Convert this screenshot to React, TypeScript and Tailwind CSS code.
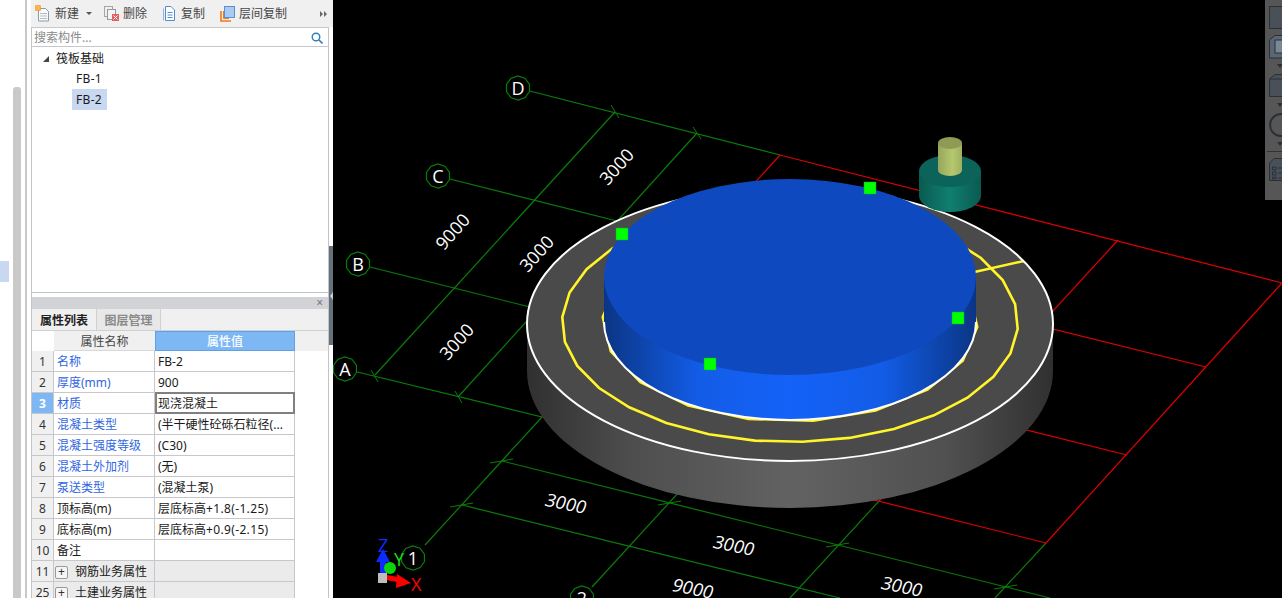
import React from "react";

const cjk = "font-['Noto_Sans','Noto_Sans_CJK_SC',sans-serif]";

interface Row {
  no: number;
  name: string;
  value: string;
  tail?: string;
  blue?: boolean;
  active?: boolean;
  group?: boolean;
}

const rows: Row[] = [
  { no: 1, name: "名称", value: "FB-2", blue: true },
  { no: 2, name: "厚度(mm)", value: "900", blue: true },
  { no: 3, name: "材质", value: "现浇混凝土", blue: true, active: true },
  { no: 4, name: "混凝土类型", value: "(半干硬性砼砾石粒径(...", blue: true },
  { no: 5, name: "混凝土强度等级", value: "(C30)", blue: true },
  { no: 6, name: "混凝土外加剂", value: "(无)", blue: true },
  { no: 7, name: "泵送类型", value: "(混凝土泵)", blue: true },
  { no: 8, name: "顶标高(m)", value: "层底标高", tail: "+1.8(-1.25)" },
  { no: 9, name: "底标高(m)", value: "层底标高", tail: "+0.9(-2.15)" },
  { no: 10, name: "备注", value: "" },
  { no: 11, name: "钢筋业务属性", value: "", group: true },
  { no: 25, name: "土建业务属性", value: "", group: true },
];

// faceted ring, the app draws its arcs as short straight pieces
function ring(cx: number, cy: number, rx: number, ry: number, n: number, phase = 0) {
  const pts: string[] = [];
  for (let i = 0; i < n; i++) {
    const a = phase + (i * Math.PI * 2) / n;
    pts.push(`${(cx + rx * Math.cos(a)).toFixed(1)},${(cy + ry * Math.sin(a)).toFixed(1)}`);
  }
  return pts.join(" ");
}

const GREEN = "#0a7d0a";
const RED = "#e00000";

const greenLines = [
  [518, 88, 780, 155],
  [438, 176, 625, 223],
  [358, 264, 530, 307],
  [345, 369, 542, 417],
  [375, 375, 615, 112],
  [458, 397, 697, 133],
  [425, 545, 542, 417],
  [502, 461, 1050, 598],
  [462, 505, 840, 598],
  [592, 587, 712, 456],
  [790, 598, 880, 500],
  [995, 598, 1046, 543],
];

const redLines = [
  [780, 155, 1282, 283],
  [625, 223, 1206, 367],
  [530, 307, 1127, 455],
  [542, 417, 1046, 543],
  [542, 417, 780, 155],
  [712, 456, 950, 196],
  [880, 500, 1118, 240],
  [1046, 543, 1282, 283],
];

const steepTicks = [
  [611, 105, 619, 118],
  [693, 127, 701, 139],
  [371, 370, 378, 382],
  [455, 391, 462, 403],
];

const flatTicks = [
  [490, 463, 513, 459],
  [450, 507, 473, 503],
  [658, 505, 681, 501],
  [826, 547, 849, 543],
  [994, 589, 1017, 585],
];

const bubbles = [
  { x: 518, y: 88, t: "D" },
  { x: 438, y: 176, t: "C" },
  { x: 358, y: 264, t: "B" },
  { x: 345, y: 369, t: "A" },
  { x: 413, y: 558, t: "1" },
  { x: 582, y: 598, t: "2" },
];

const dims = [
  { x: 617, y: 167, t: "3000", r: "rotate(-48)" },
  { x: 453, y: 232, t: "9000", r: "rotate(-48)" },
  { x: 537, y: 254, t: "3000", r: "rotate(-48)" },
  { x: 457, y: 342, t: "3000", r: "rotate(-48)" },
  { x: 566, y: 504, t: "3000", r: "rotate(12) skewX(-8)" },
  { x: 734, y: 546, t: "3000", r: "rotate(12) skewX(-8)" },
  { x: 693, y: 589, t: "9000", r: "rotate(12) skewX(-8)" },
  { x: 902, y: 587, t: "3000", r: "rotate(12) skewX(-8)" },
];

const handles = [
  [870, 188],
  [622, 234],
  [958, 318],
  [710, 364],
];

function Viewport() {
  return (
    <svg viewBox="333 0 949 598" className="block w-full h-full">
      <defs>
        <linearGradient id="plate" x1="0" x2="1" y1="0" y2="0">
          <stop offset="0" stopColor="#303030" />
          <stop offset="0.2" stopColor="#4e4e4e" />
          <stop offset="0.5" stopColor="#626262" />
          <stop offset="0.8" stopColor="#505050" />
          <stop offset="1" stopColor="#303030" />
        </linearGradient>
        <linearGradient id="wall" x1="0" x2="1" y1="0" y2="0">
          <stop offset="0" stopColor="#0b3584" />
          <stop offset="0.25" stopColor="#125ce6" />
          <stop offset="0.5" stopColor="#1562f8" />
          <stop offset="0.75" stopColor="#125ce6" />
          <stop offset="1" stopColor="#0b3584" />
        </linearGradient>
        <linearGradient id="teal" x1="0" x2="1" y1="0" y2="0">
          <stop offset="0" stopColor="#0a5a50" />
          <stop offset="0.5" stopColor="#0f7f70" />
          <stop offset="1" stopColor="#0a5a50" />
        </linearGradient>
        <linearGradient id="olive" x1="0" x2="1" y1="0" y2="0">
          <stop offset="0" stopColor="#98a65c" />
          <stop offset="0.6" stopColor="#b4c86e" />
          <stop offset="1" stopColor="#a0b062" />
        </linearGradient>
      </defs>

      {greenLines.map((l, i) => (
        <line key={i} x1={l[0]} y1={l[1]} x2={l[2]} y2={l[3]} stroke={GREEN} strokeWidth="1.2" />
      ))}
      {redLines.map((l, i) => (
        <line key={i} x1={l[0]} y1={l[1]} x2={l[2]} y2={l[3]} stroke={RED} strokeWidth="1.2" />
      ))}
      {[...steepTicks, ...flatTicks].map((l, i) => (
        <line key={i} x1={l[0]} y1={l[1]} x2={l[2]} y2={l[3]} stroke={GREEN} strokeWidth="1" />
      ))}

      {bubbles.map((b) => (
        <g key={b.t}>
          <polygon points={ring(b.x, b.y, 12, 12, 10, 0.3)} fill="#000" stroke={GREEN} strokeWidth="1.2" />
          <text
            x={b.x}
            y={b.y + 6.5}
            textAnchor="middle"
            fill="#fff"
            fontSize="18"
            fontFamily="'Open Sans', sans-serif"
          >
            {b.t}
          </text>
        </g>
      ))}

      {dims.map((d, i) => (
        <text
          key={i}
          transform={`translate(${d.x} ${d.y}) ${d.r}`}
          y="6"
          textAnchor="middle"
          fill="#fff"
          fontSize="18"
          fontFamily="'Open Sans', sans-serif"
        >
          {d.t}
        </text>
      ))}

      {/* base slab */}
      <path d="M527 324 A263 137 0 0 0 1053 324 L1053 371 A263 137 0 0 1 527 371 Z" fill="url(#plate)" />
      <ellipse cx="790" cy="324" rx="263" ry="137" fill="#4a4a4a" />
      <polygon points={ring(790, 323, 228, 119, 30, 0.05)} fill="none" stroke="#fff52a" strokeWidth="2.6" />
      <line x1="970" y1="273" x2="1024" y2="261" stroke="#fff52a" strokeWidth="2.5" />
      <polygon points={ring(790, 322, 187.5, 99.5, 18, 0.05)} fill="none" stroke="#fff52a" strokeWidth="2.5" />
      <ellipse cx="790" cy="324" rx="263" ry="137" fill="none" stroke="#fff" strokeWidth="2" />

      {/* raised cylinder */}
      <path d="M604 277 L604 322 A186 98 0 0 0 976 322 L976 277 Z" fill="url(#wall)" />
      <path d="M604 322 A186 98 0 0 0 976 322" fill="none" stroke="#fff" strokeWidth="2" />
      <ellipse cx="790" cy="277" rx="186" ry="98" fill="#0f49bf" />

      {/* column */}
      <path d="M919 171 L919 196 A31 16 0 0 0 981 196 L981 171 Z" fill="url(#teal)" />
      <ellipse cx="950" cy="171" rx="31" ry="16" fill="#0b6359" />
      <path d="M938 143 L938 170 A12 6 0 0 0 962 170 L962 143 Z" fill="url(#olive)" />
      <ellipse cx="950" cy="143" rx="12" ry="6" fill="#8f9a55" />

      {handles.map((h, i) => (
        <rect key={i} x={h[0] - 6} y={h[1] - 6} width="12" height="12" fill="#00ff00" stroke="#0ea83a" strokeWidth="0.5" />
      ))}

      {/* axis gizmo */}
      <line x1="383" y1="576" x2="383" y2="558" stroke="#0a2cff" strokeWidth="6" />
      <polygon points="383,549 376,562 390,562" fill="#0a2cff" />
      <circle cx="390" cy="568" r="6" fill="#0bd40b" />
      <line x1="384" y1="577" x2="400" y2="580" stroke="#ff0000" strokeWidth="5" />
      <polygon points="411,583 397,574 396,588" fill="#ff0000" />
      <rect x="378" y="573" width="9" height="10" fill="#bdbdbd" />
      <g fontFamily="'Open Sans', sans-serif" fontSize="18">
        <text x="378" y="552" fill="#0a2cff">Z</text>
        <text x="394" y="566" fill="#16e016">Y</text>
        <text x="411" y="591" fill="#ff0000">X</text>
      </g>
    </svg>
  );
}

function SideTools() {
  return (
    <div className="absolute right-0 top-0 w-[17px] h-[200px] bg-[#565656] overflow-hidden">
      <svg width="24" height="200" viewBox="0 0 24 200" className="block">
        <g stroke="#2b3036" strokeWidth="1" fill="#4a5058">
          <rect x="4.5" y="6.5" width="22" height="22" />
          <path d="M4.5 40 L10 35.5 H26 V58 H4.5 Z" fill="#5b6674" />
          <rect x="10" y="40" width="16" height="13" fill="#7a8794" />
          <path d="M4.5 79 L10 74.5 H26 V96.5 H4.5 Z" />
          <path d="M4.5 79 H26" fill="none" />
          <circle cx="16" cy="125" r="11" strokeWidth="2" fill="none" />
          <path d="M4.5 163 L9 158.5 H26 V180.5 H4.5 Z" />
          <path d="M7.5 167 H11 V170 H7.5 Z M7.5 172 H11 V175 H7.5 Z M7.5 177 H11 V179 H7.5 Z M13 168 H17 M13 173 H17 M13 178 H17" fill="none" />
        </g>
        <path d="M12 64 H18 L15 68 Z M12 103 H18 L15 107 Z M12 142 H18 L15 146 Z" fill="#2b2f33" />
        <line x1="2" y1="151.5" x2="17" y2="151.5" stroke="#333" />
      </svg>
    </div>
  );
}

function ToolButton({ label, icon, className }: { label: string; icon: React.ReactNode; className: string }) {
  return (
    <div className={`flex items-center ${className}`}>
      {icon}
      <span className="text-[12px] leading-none text-[#454545]">{label}</span>
    </div>
  );
}

function Toolbar() {
  return (
    <div className="relative h-[27px] bg-[#f0f0f0] flex items-center pl-[4px]">
      <ToolButton
        label="新建"
        className="gap-[5px]"
        icon={
          <svg width="15" height="17" viewBox="0 0 15 17">
            <path d="M3.5 3.5 H10.5 L13.5 6.5 V16 H3.5 Z" fill="#fafafa" stroke="#8c9aa5" />
            <path d="M5 8.5 H12 M5 11 H12 M5 13.5 H12" stroke="#b5bec6" />
            <rect x="0.5" y="0.5" width="5" height="5" fill="#ffb347" stroke="#f08a1d" strokeDasharray="1 1" />
          </svg>
        }
      />
      <svg width="6" height="3" viewBox="0 0 6 3" className="ml-[7px]">
        <path d="M0 0 H6 L3 3 Z" fill="#555" />
      </svg>
      <ToolButton
        label="删除"
        className="gap-[4px] ml-[12px]"
        icon={
          <svg width="15" height="17" viewBox="0 0 15 17">
            <rect x="0.5" y="1.5" width="8" height="10" fill="none" stroke="#a5a5a5" />
            <rect x="3.5" y="4.5" width="8" height="10" fill="#f4f4f4" stroke="#8c9aa5" />
            <rect x="8" y="9" width="7" height="7" fill="#e26060" />
            <path d="M9.5 10.5 L13.5 14.5 M13.5 10.5 L9.5 14.5" stroke="#fff" />
          </svg>
        }
      />
      <ToolButton
        label="复制"
        className="gap-[6px] ml-[16px]"
        icon={
          <svg width="12" height="15" viewBox="0 0 12 15">
            <path d="M2.5 0.5 H8 L11.5 4 V14.5 H2.5 Z" fill="#fff" stroke="#4a8fd6" />
            <path d="M0.5 2.5 V14.5" stroke="#9fb3c6" />
            <path d="M4.5 6.5 H9.5 M4.5 9 H9.5 M4.5 11.5 H9.5" stroke="#4a8fd6" />
          </svg>
        }
      />
      <ToolButton
        label="层间复制"
        className="gap-[4px] ml-[15px]"
        icon={
          <svg width="15" height="16" viewBox="0 0 15 16">
            <path d="M1 5 V15 H11" fill="none" stroke="#f07818" strokeWidth="1.6" />
            <path d="M3.5 5 V12.5 H9" fill="none" stroke="#f07818" />
            <rect x="4.5" y="0.5" width="10" height="11" fill="#a9cbf2" stroke="#5a8fd0" />
          </svg>
        }
      />
      <svg width="7" height="6" viewBox="0 0 7 6" className="absolute left-[289px] top-[11px]">
        <path d="M0 0 L3 3 L0 6 Z M4 0 L7 3 L4 6 Z" fill="#666" />
      </svg>
    </div>
  );
}

function TreePanel() {
  return (
    <div className="h-[246px] shrink-0 bg-white border-b border-[#c4c4c8] text-[12px] text-[#1a1a1a]">
      <div className="h-[21px] flex items-center pl-[11px] pt-[2px]">
        <svg width="6" height="6" viewBox="0 0 6 6">
          <path d="M6 0 V6 H0 Z" fill="#444" />
        </svg>
        <span className="ml-[7px] leading-none">筏板基础</span>
      </div>
      <div className="h-[21px] flex items-center pl-[44px] tracking-[0.3px]">FB-1</div>
      <div className="h-[21px] ml-[40px] w-[35px] flex items-center pl-[4px] bg-[#c8d8f0] tracking-[0.3px]">FB-2</div>
    </div>
  );
}

function PropertyRow({ row }: { row: Row }) {
  return (
    <div className="flex w-[263px] h-[21px] border-b border-[#c8c8cc] text-[12px]">
      <div
        className={`w-[22px] pt-[2px] border-r border-[#c8c8cc] flex items-center justify-center ${
          row.active ? "bg-[#7db8f5] text-white font-bold" : "bg-[#f0f0f0] text-[#333]"
        }`}
      >
        {row.no}
      </div>
      <div
        className={`w-[101px] pt-[2px] border-r border-[#c8c8cc] flex items-center whitespace-nowrap ${
          row.group ? "bg-[#ebebeb] pl-[1px]" : "pl-[3px] bg-white"
        } ${row.blue ? "text-[#2f66e0]" : "text-[#1a1a1a]"}`}
      >
        {row.group && (
          <span className="w-[13px] h-[13px] mr-[7px] border border-[#9a9a9a] rounded-[2px] bg-[#f6f6f6] flex items-center justify-center text-[12px] leading-none text-[#333]">
            +
          </span>
        )}
        {row.name}
      </div>
      <div
        className={`w-[140px] flex items-center whitespace-nowrap text-[#1a1a1a] ${
          row.group ? "bg-[#ebebeb]" : "bg-white"
        } ${row.active ? "border-2 border-[#808080] pl-[1px] pt-[1px] -mt-[1px] h-[22px]" : "border-r border-[#c8c8cc] pl-[3px] pt-[2px]"}`}
      >
        {row.value}
        {row.tail && <span className="tracking-[0.35px]">{row.tail}</span>}
      </div>
    </div>
  );
}

function PropertyPanel() {
  return (
    <div className="flex-1 min-h-0 overflow-hidden">
      <div className="h-[12px] bg-[#d2d3d7] flex items-center justify-end pr-[5px]">
        <span className="text-[12px] leading-none text-[#777]">×</span>
      </div>
      <div className="flex h-[22px] bg-[#f0f0f0] border-b border-[#d0d0d0] text-[12px]">
        <div className="w-[64px] pt-[2px] flex items-center justify-center font-semibold text-[#222]">属性列表</div>
        <div className="w-[65px] pt-[2px] flex items-center justify-center border-x border-[#d0d0d0] bg-[#e8e8e8] text-[#8a8a8a] font-semibold">
          图层管理
        </div>
      </div>
      <div className="flex h-[20px] text-[12px]">
        <div className="w-[22px] bg-white" />
        <div className="w-[101px] pt-[2px] bg-[#f0f0f0] border-b border-[#d8d8d8] flex items-center justify-center text-[#444]">
          属性名称
        </div>
        <div className="w-[140px] pt-[1px] bg-[#7db8f5] border border-[#5fa0e0] flex items-center justify-center text-white font-medium">
          属性值
        </div>
        <div className="flex-1 bg-[#f0f0f0]" />
      </div>
      {rows.map((r) => (
        <PropertyRow key={r.no} row={r} />
      ))}
    </div>
  );
}

export default function App() {
  return (
    <div className={`flex w-[1282px] h-[598px] overflow-hidden bg-white ${cjk}`}>
      <div className="w-[27px] shrink-0 flex border-r-2 border-[#c8c8cc]">
        <div className="w-[9px] h-[21px] mt-[261px] bg-[#c8d8f0]" />
        <div className="w-[8px] ml-[4px] mt-[87px] bg-[#c9c9c9] rounded-t-[3px]" />
      </div>
      <div className="w-[4px] shrink-0" />
      <div className="relative w-[302px] shrink-0 flex flex-col">
        <div className="absolute right-0 top-[246px] w-[4px] h-[99px] bg-[#65707a] z-10 flex items-center">
          <svg width="3" height="8" viewBox="0 0 3 8" className="ml-[1px]">
            <path d="M3 0 V8 L0 4 Z" fill="#c9ced3" />
          </svg>
        </div>
        <Toolbar />
        <div className="flex-1 min-h-0 flex flex-col mr-[4px] border-l border-r border-[#c4c4c8] bg-white">
          <div className="h-[20px] shrink-0 border-y border-[#c8c8cc] flex items-center justify-between pl-[2px] pr-[5px] pt-[1px]">
            <span className="text-[12px] leading-none text-[#8a8a8a]">搜索构件...</span>
            <svg width="12" height="12" viewBox="0 0 12 12">
              <circle cx="5" cy="5" r="3.8" fill="none" stroke="#2a80b9" strokeWidth="1.4" />
              <path d="M8 8 L11.5 11.5" stroke="#2a80b9" strokeWidth="1.6" />
            </svg>
          </div>
          <TreePanel />
          <div className="h-[4px] shrink-0" />
          <PropertyPanel />
        </div>
      </div>
      <div className="relative flex-1 min-w-0 bg-black">
        <Viewport />
        <SideTools />
      </div>
    </div>
  );
}
